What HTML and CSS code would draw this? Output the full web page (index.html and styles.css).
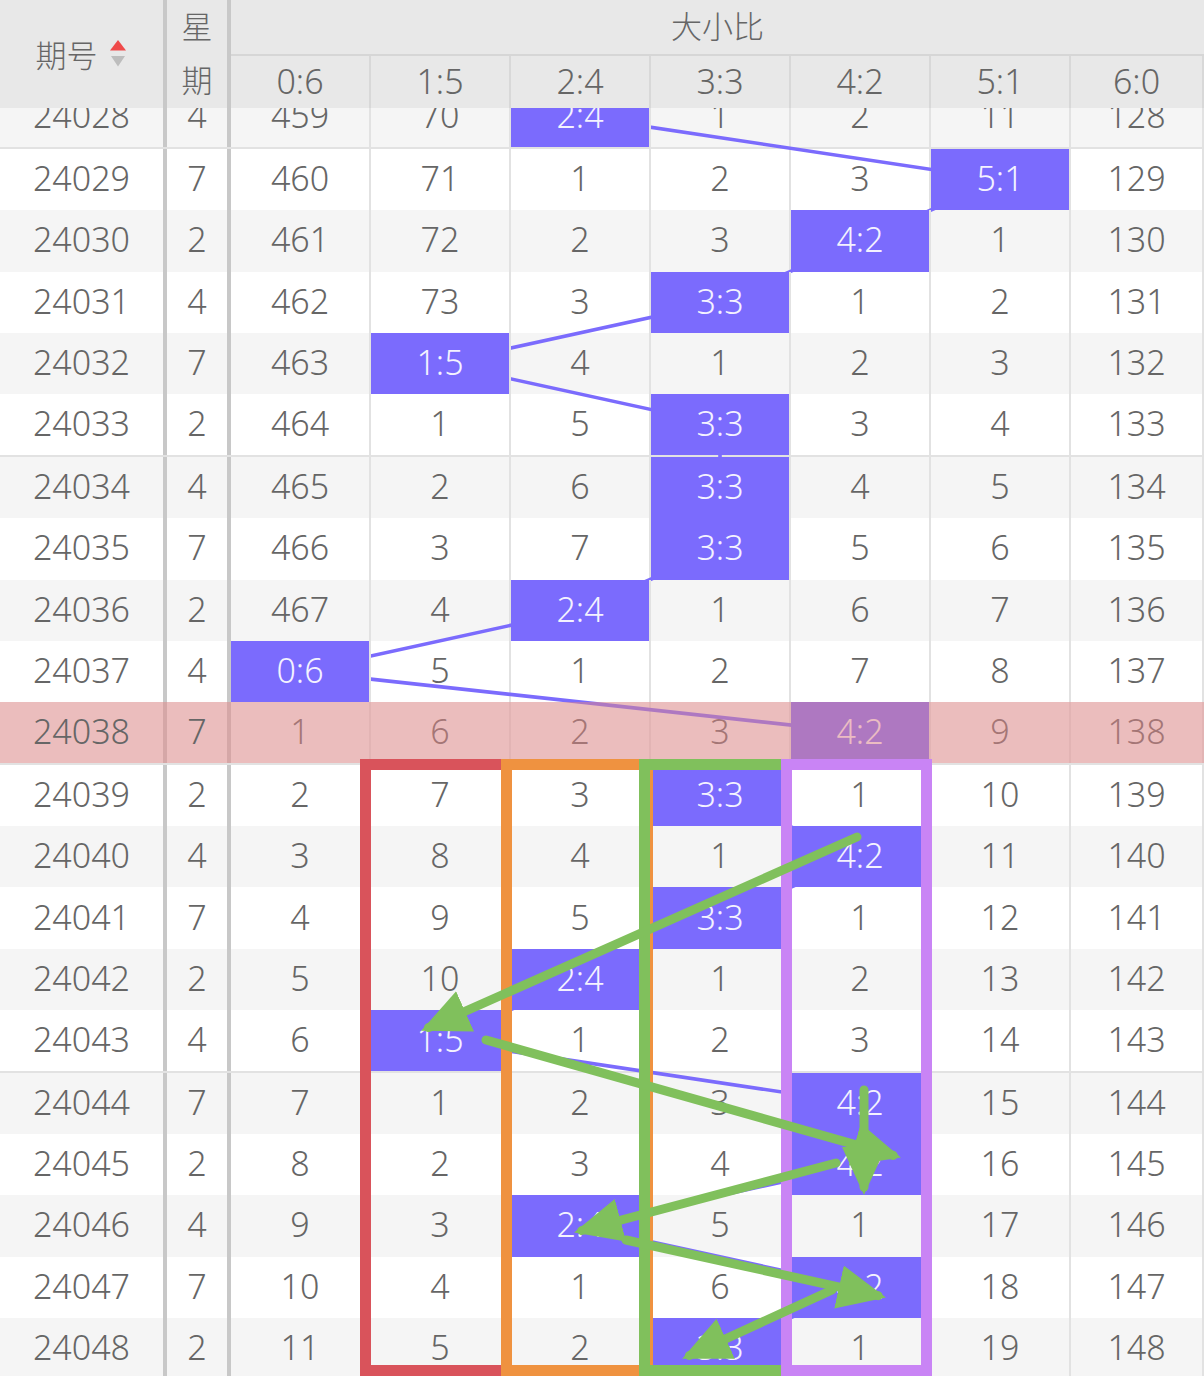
FILE: index.html
```html
<!DOCTYPE html>
<html lang="zh">
<head>
<meta charset="utf-8">
<title>大小比走势</title>
<link rel="stylesheet" href="styles.css">
</head>
<body>
<div class="page">
  <div class="head">
    <div class="h-qh"><span>期号</span>
      <svg class="sort" width="16" height="28" viewBox="0 0 16 28"><polygon points="8,0 16,10.5 0,10.5" fill="#ef4a4a"/><polygon points="1,16 15,16 8,26.5" fill="#bdbdbd"/></svg>
    </div>
    <div class="h-xq"><span>星</span><span>期</span></div>
    <div class="h-chart">
      <div class="h-title">大小比</div>
      <div class="h-cols"><div>0:6</div><div>1:5</div><div>2:4</div><div>3:3</div><div>4:2</div><div>5:1</div><div>6:0</div></div>
    </div>
  </div>
  <div class="viewport">
    <div class="rows">
      <svg class="links" width="1204" height="1294" viewBox="0 0 1204 1294">
        <polyline points="580,30.6 1000,93.8 860,155 720,216.2 440,277.4 720,338.6 720,401.8 720,463 580,524.2 300,585.4 860,646.6 720,709.8 860,771 720,832.2 580,893.4 440,954.6 860,1017.8 860,1079 580,1140.2 860,1201.4 720,1262.6" fill="none" stroke="#7b6bfd" stroke-width="3.6"/>
      </svg>
      <div class="row even gend"><div class="c qh">24028</div><div class="c xq">4</div><div class="c">459</div><div class="c">70</div><div class="c blk">2:4</div><div class="c">1</div><div class="c">2</div><div class="c">11</div><div class="c">128</div></div>
      <div class="row"><div class="c qh">24029</div><div class="c xq">7</div><div class="c">460</div><div class="c">71</div><div class="c">1</div><div class="c">2</div><div class="c">3</div><div class="c blk">5:1</div><div class="c">129</div></div>
      <div class="row even"><div class="c qh">24030</div><div class="c xq">2</div><div class="c">461</div><div class="c">72</div><div class="c">2</div><div class="c">3</div><div class="c blk">4:2</div><div class="c">1</div><div class="c">130</div></div>
      <div class="row"><div class="c qh">24031</div><div class="c xq">4</div><div class="c">462</div><div class="c">73</div><div class="c">3</div><div class="c blk">3:3</div><div class="c">1</div><div class="c">2</div><div class="c">131</div></div>
      <div class="row even"><div class="c qh">24032</div><div class="c xq">7</div><div class="c">463</div><div class="c blk">1:5</div><div class="c">4</div><div class="c">1</div><div class="c">2</div><div class="c">3</div><div class="c">132</div></div>
      <div class="row gend"><div class="c qh">24033</div><div class="c xq">2</div><div class="c">464</div><div class="c">1</div><div class="c">5</div><div class="c blk">3:3</div><div class="c">3</div><div class="c">4</div><div class="c">133</div></div>
      <div class="row even"><div class="c qh">24034</div><div class="c xq">4</div><div class="c">465</div><div class="c">2</div><div class="c">6</div><div class="c blk">3:3</div><div class="c">4</div><div class="c">5</div><div class="c">134</div></div>
      <div class="row"><div class="c qh">24035</div><div class="c xq">7</div><div class="c">466</div><div class="c">3</div><div class="c">7</div><div class="c blk">3:3</div><div class="c">5</div><div class="c">6</div><div class="c">135</div></div>
      <div class="row even"><div class="c qh">24036</div><div class="c xq">2</div><div class="c">467</div><div class="c">4</div><div class="c blk">2:4</div><div class="c">1</div><div class="c">6</div><div class="c">7</div><div class="c">136</div></div>
      <div class="row"><div class="c qh">24037</div><div class="c xq">4</div><div class="c blk">0:6</div><div class="c">5</div><div class="c">1</div><div class="c">2</div><div class="c">7</div><div class="c">8</div><div class="c">137</div></div>
      <div class="row even gend hl"><div class="c qh"><span>24038</span></div><div class="c xq"><span>7</span></div><div class="c">1</div><div class="c">6</div><div class="c">2</div><div class="c">3</div><div class="c blk">4:2</div><div class="c">9</div><div class="c">138</div><div class="hl-ov"></div></div>
      <div class="row"><div class="c qh">24039</div><div class="c xq">2</div><div class="c">2</div><div class="c">7</div><div class="c">3</div><div class="c blk">3:3</div><div class="c">1</div><div class="c">10</div><div class="c">139</div></div>
      <div class="row even"><div class="c qh">24040</div><div class="c xq">4</div><div class="c">3</div><div class="c">8</div><div class="c">4</div><div class="c">1</div><div class="c blk">4:2</div><div class="c">11</div><div class="c">140</div></div>
      <div class="row"><div class="c qh">24041</div><div class="c xq">7</div><div class="c">4</div><div class="c">9</div><div class="c">5</div><div class="c blk">3:3</div><div class="c">1</div><div class="c">12</div><div class="c">141</div></div>
      <div class="row even"><div class="c qh">24042</div><div class="c xq">2</div><div class="c">5</div><div class="c">10</div><div class="c blk">2:4</div><div class="c">1</div><div class="c">2</div><div class="c">13</div><div class="c">142</div></div>
      <div class="row gend"><div class="c qh">24043</div><div class="c xq">4</div><div class="c">6</div><div class="c blk">1:5</div><div class="c">1</div><div class="c">2</div><div class="c">3</div><div class="c">14</div><div class="c">143</div></div>
      <div class="row even"><div class="c qh">24044</div><div class="c xq">7</div><div class="c">7</div><div class="c">1</div><div class="c">2</div><div class="c">3</div><div class="c blk">4:2</div><div class="c">15</div><div class="c">144</div></div>
      <div class="row"><div class="c qh">24045</div><div class="c xq">2</div><div class="c">8</div><div class="c">2</div><div class="c">3</div><div class="c">4</div><div class="c blk">4:2</div><div class="c">16</div><div class="c">145</div></div>
      <div class="row even"><div class="c qh">24046</div><div class="c xq">4</div><div class="c">9</div><div class="c">3</div><div class="c blk">2:4</div><div class="c">5</div><div class="c">1</div><div class="c">17</div><div class="c">146</div></div>
      <div class="row"><div class="c qh">24047</div><div class="c xq">7</div><div class="c">10</div><div class="c">4</div><div class="c">1</div><div class="c">6</div><div class="c blk">4:2</div><div class="c">18</div><div class="c">147</div></div>
      <div class="row even"><div class="c qh">24048</div><div class="c xq">2</div><div class="c">11</div><div class="c">5</div><div class="c">2</div><div class="c blk">3:3</div><div class="c">1</div><div class="c">19</div><div class="c">148</div></div>
    </div>
  </div>
  <svg class="marks" width="1204" height="1376" viewBox="0 0 1204 1376">
    <defs>
      <marker id="ah" markerUnits="userSpaceOnUse" markerWidth="48" markerHeight="44" viewBox="0 0 48 44" refX="40" refY="22" orient="auto">
        <path d="M0,0 L48,22 L0,44 Z" fill="#80c05c"/>
      </marker>
    </defs>
    <g fill="none" stroke-width="11">
      <rect x="365.5" y="764.5" width="141" height="606" stroke="#d9535b"/>
      <rect x="506.5" y="764.5" width="141" height="606" stroke="#ef9240"/>
      <rect x="644.5" y="764.5" width="142" height="606" stroke="#80c05c"/>
      <rect x="786.5" y="764.5" width="140" height="606" stroke="#c984f5"/>
    </g>
    <g stroke="#80c05c" stroke-width="9" stroke-linecap="round" marker-end="url(#ah)">
      <line x1="857" y1="837" x2="428.5" y2="1027.6"/>
      <line x1="486" y1="1040" x2="893.2" y2="1155.4"/>
      <line x1="864" y1="1090" x2="864" y2="1187"/>
      <line x1="836" y1="1163" x2="581.8" y2="1230.5"/>
      <line x1="626" y1="1240" x2="878.1" y2="1295.7"/>
      <line x1="832" y1="1290" x2="689.4" y2="1355.5"/>
    </g>
  </svg>
</div>
</body>
</html>
```

FILE: styles.css
```css
* {
  box-sizing: border-box;
}

html,
body {
  margin: 0;
  padding: 0;
  background: #ffffff;
}

body {
  font-family: "Noto Sans", "Noto Sans CJK SC", sans-serif;
  font-weight: 300;
  color: #666666;
}

.page {
  position: relative;
  width: 1204px;
  height: 1376px;
  overflow: hidden;
}

/* ---------- header ---------- */
.head {
  display: grid;
  grid-template-columns: 167px 64px 1fr;
  height: 108px;
  background: #e8e8e8;
}

.h-qh {
  border-right: 4px solid #c8c8c8;
  display: flex;
  align-items: center;
  justify-content: center;
  gap: 12px;
  font-family: "Noto Sans CJK SC", sans-serif;
  font-size: 31px;
  padding-bottom: 2px;
  padding-right: 2px;
}

.sort {
  display: block;
  margin-top: 2px;
}

.h-xq {
  border-right: 4px solid #c8c8c8;
  display: flex;
  flex-direction: column;
  font-family: "Noto Sans CJK SC", sans-serif;
  font-size: 31px;
}

.h-xq span {
  height: 54px;
  display: flex;
  align-items: center;
  justify-content: center;
  padding-bottom: 5px;
}

.h-chart {
  display: flex;
  flex-direction: column;
}

.h-title {
  height: 56px;
  border-bottom: 2px solid #d6d6d6;
  display: flex;
  align-items: center;
  justify-content: center;
  font-family: "Noto Sans CJK SC", sans-serif;
  font-size: 31px;
  padding-bottom: 6px;
}

.h-cols {
  flex: 1;
  display: grid;
  grid-template-columns: repeat(6, 140px) 1fr;
}

.h-cols div {
  border-right: 2px solid #d8d8d8;
  display: flex;
  align-items: center;
  justify-content: center;
  font-size: 34px;
  padding-bottom: 2px;
}

/* ---------- body ---------- */
.viewport {
  height: 1268px;
  overflow: hidden;
}

.rows {
  position: relative;
  margin-top: -22px;
}

.links {
  position: absolute;
  top: 0;
  left: 0;
  z-index: 1;
  pointer-events: none;
}

.row {
  display: grid;
  grid-template-columns: 167px 64px repeat(6, 140px) 1fr;
  height: 61.2px;
  background: #ffffff;
}

.row.even {
  background: #f5f5f5;
}

.row.gend {
  height: 63.2px;
  border-bottom: 2px solid #e2e2e2;
}

.c {
  display: flex;
  align-items: center;
  justify-content: center;
  font-size: 34px;
  padding-bottom: 3px;
  border-right: 2px solid #e2e2e2;
}

.c.qh,
.c.xq {
  border-right: 4px solid #c8c8c8;
}

.blk {
  position: relative;
  z-index: 2;
  background: #7b6bfd;
  color: #f4f2ff;
}

.row.hl {
  position: relative;
}

.hl .qh span,
.hl .xq span {
  position: relative;
  z-index: 4;
}

.hl-ov {
  position: absolute;
  top: 0;
  left: 0;
  right: 0;
  bottom: 0;
  z-index: 3;
  background: rgba(226, 133, 133, 0.5);
}

.marks {
  position: absolute;
  top: 0;
  left: 0;
  z-index: 5;
  pointer-events: none;
}
```
